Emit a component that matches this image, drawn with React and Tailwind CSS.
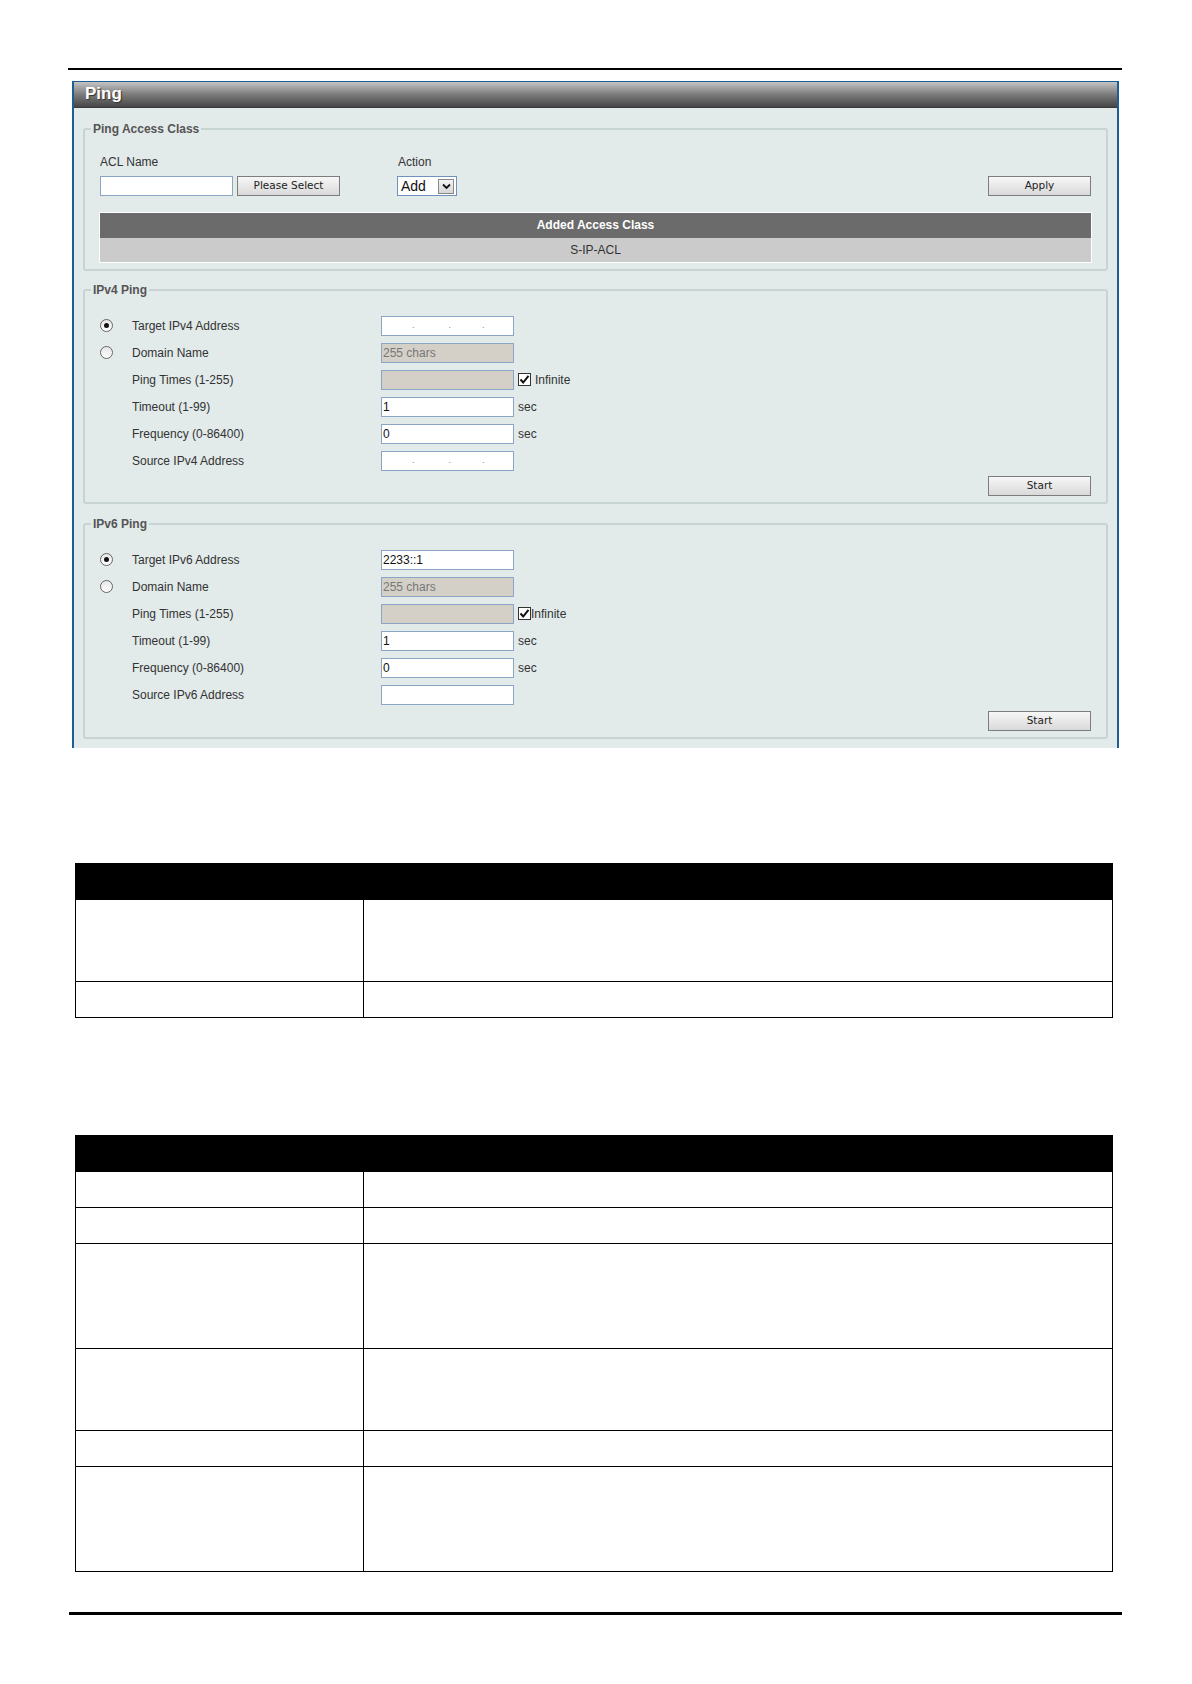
import React from 'react';

const labelCls = "text-[12px] leading-[14px] text-[#333]";

const Btn = ({ children, className = "" }) => (
  <button
    type="button"
    className={`h-[20px] w-[103px] border border-[#7d7d7d] bg-linear-to-b from-[#f7f7f7] to-[#d9d9d9] text-[10.5px] text-[#222] font-['DejaVu_Sans',Tahoma,sans-serif] ${className}`}
  >
    {children}
  </button>
);

const TextBox = ({ value = "", disabled = false, muted = false }) => (
  <div
    className={`h-[20px] w-[133px] border border-[#8aa6c4] px-px text-[12px] leading-[18px] ${
      disabled ? "bg-[#d4d0c8]" : "bg-white"
    } ${muted ? "text-[#777]" : "text-[#111]"}`}
  >
    {value}
  </div>
);

// IPv4 entry split into four octet slots
const IpBox = () => (
  <div className="flex h-[20px] w-[133px] items-center border border-[#8aa6c4] bg-white pl-[30px] text-[9px] text-[#888]">
    <span>.</span>
    <span className="ml-[34px]">.</span>
    <span className="ml-[31px]">.</span>
  </div>
);

const Radio = ({ checked }) => (
  <span className="flex h-[13px] w-[13px] items-center justify-center rounded-full border border-[#666] bg-linear-to-b from-[#e6e6e6] to-white">
    {checked && <span className="h-[5px] w-[5px] rounded-full bg-[#111]" />}
  </span>
);

const Check = () => (
  <span className="flex h-[13px] w-[13px] items-center justify-center border border-[#333] bg-white">
    <svg width="11" height="11" viewBox="0 0 11 11">
      <path d="M1.5 5.5 L4.2 8.5 L9.5 1.8" fill="none" stroke="#111" strokeWidth="2" />
    </svg>
  </span>
);

const Legend = ({ children }) => (
  <legend className="ml-[6px] px-[2px] text-[12px] font-bold leading-[16px] text-[#555]">
    {children}
  </legend>
);

const PingRow = ({ radio, label, children }) => (
  <div className="flex h-[27px] items-center">
    <div className="w-[32px]">{radio !== undefined && <Radio checked={radio} />}</div>
    <div className={`w-[249px] ${labelCls}`}>{label}</div>
    {children}
  </div>
);

const PingSet = ({ ver, target, source, tight }) => (
  <>
    <PingRow radio={true} label={`Target IPv${ver} Address`}>
      {ver === 4 ? <IpBox /> : <TextBox value={target} />}
    </PingRow>
    <PingRow radio={false} label="Domain Name">
      <TextBox value="255 chars" disabled muted />
    </PingRow>
    <PingRow label="Ping Times (1-255)">
      <TextBox disabled />
      <span className="ml-[4px]"><Check /></span>
      <span className={`${tight ? "ml-0" : "ml-[4px]"} ${labelCls}`}>Infinite</span>
    </PingRow>
    <PingRow label="Timeout (1-99)">
      <TextBox value="1" />
      <span className={`ml-[4px] ${labelCls}`}>sec</span>
    </PingRow>
    <PingRow label="Frequency (0-86400)">
      <TextBox value="0" />
      <span className={`ml-[4px] ${labelCls}`}>sec</span>
    </PingRow>
    <PingRow label={`Source IPv${ver} Address`}>
      {ver === 4 ? <IpBox /> : <TextBox value={source} />}
    </PingRow>
  </>
);

const DocTable = ({ rows }) => (
  <div className="ml-[75px] w-[1038px] border border-black">
    <div className="h-[35px] bg-black" />
    {rows.map((h, i) => (
      <div key={i} className="flex border-t border-black" style={{ height: h }}>
        <div className="w-[288px] border-r border-black" />
        <div className="flex-1" />
      </div>
    ))}
  </div>
);

export default function App() {
  return (
    <div className="min-h-[1684px] w-[1192px] bg-white pt-[68px] font-['Liberation_Sans',Arial,sans-serif]">
      <div className="ml-[68px] h-[2px] w-[1054px] bg-black" />

      {/* Ping panel */}
      <section className="ml-[72px] mt-[11px] w-[1047px] border-x-2 border-t border-[#1d5d98] bg-[#e2eaea] px-[9px] pb-[9px]">
        <div className="-mx-[9px] h-[26px] border-b border-[#3a3a3a] bg-linear-to-b from-[#c4c4c4] via-[#7c7c7c] to-[#464646] pl-[11px] text-[17px] font-bold leading-[24px] text-white [text-shadow:1px_1px_1px_#333]">
          Ping
        </div>

        <fieldset className="mt-[13px] rounded-[3px] border-2 border-[#c8d4d4]">
          <Legend>Ping Access Class</Legend>
          <div className="px-[15px] pb-[6px] pt-[18px]">
            <div className="flex">
              <div className={`w-[298px] ${labelCls}`}>ACL Name</div>
              <div className={labelCls}>Action</div>
            </div>
            <div className="mt-[7px] flex items-center">
              <TextBox />
              <Btn className="ml-[4px]">Please Select</Btn>
              <div className="ml-[57px] flex h-[20px] w-[60px] items-center border border-[#6f93bd] bg-white pl-[3px] pr-[2px]">
                <span className="flex-1 text-[14px] leading-[16px] text-[#111]">Add</span>
                <span className="flex h-[15px] w-[16px] items-center justify-center border border-[#888] bg-linear-to-b from-[#f4f4f4] to-[#d6d6d6]">
                  <svg width="9" height="7" viewBox="0 0 9 7">
                    <path d="M1 1.5 L4.5 5 L8 1.5" fill="none" stroke="#111" strokeWidth="1.8" />
                  </svg>
                </span>
              </div>
              <Btn className="ml-auto">Apply</Btn>
            </div>
            <div className="-mx-px mt-[16px] border border-white">
              <div className="h-[25px] bg-[#6b6b6b] text-center text-[12px] font-bold leading-[25px] text-white">
                Added Access Class
              </div>
              <div className="h-[24px] bg-[#cbcbcb] text-center text-[12px] leading-[24px] text-[#333]">
                S-IP-ACL
              </div>
            </div>
          </div>
        </fieldset>

        <fieldset className="mt-[11px] rounded-[3px] border-2 border-[#c8d4d4]">
          <Legend>IPv4 Ping</Legend>
          <div className="px-[15px] pb-[6px] pt-[14px]">
            <PingSet ver={4} />
            <div className="mt-[2px] flex justify-end">
              <Btn>Start</Btn>
            </div>
          </div>
        </fieldset>

        <fieldset className="mt-[12px] rounded-[3px] border-2 border-[#c8d4d4]">
          <Legend>IPv6 Ping</Legend>
          <div className="px-[15px] pb-[6px] pt-[14px]">
            <PingSet ver={6} target="2233::1" source="" tight />
            <div className="mt-[3px] flex justify-end">
              <Btn>Start</Btn>
            </div>
          </div>
        </fieldset>
      </section>

      <div className="mt-[115px]">
        <DocTable rows={[82, 36]} />
      </div>
      <div className="mt-[117px]">
        <DocTable rows={[36, 36, 105, 82, 36, 105]} />
      </div>

      <div className="ml-[69px] mt-[40px] h-[3px] w-[1053px] bg-black" />
    </div>
  );
}
